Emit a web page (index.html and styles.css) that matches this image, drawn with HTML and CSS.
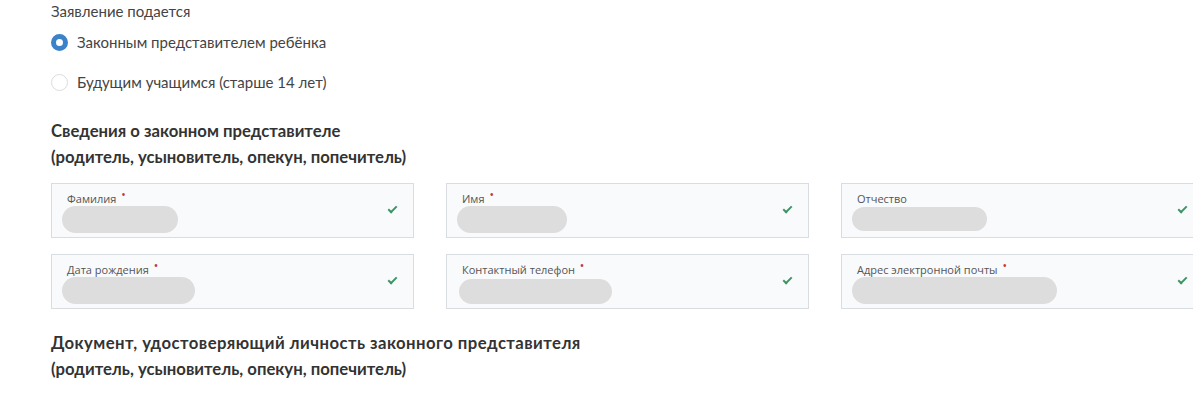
FILE: index.html
```html
<!DOCTYPE html>
<html lang="ru">
	<head>
		<meta charset="UTF-8" />
		<title>Заявление</title>
		<link rel="stylesheet" href="styles.css">
	</head>
	<body>
		<div class="page">
			<div class="group-title">Заявление подается</div>
			<div class="radio-list">
				<label class="radio radio-checked"><span class="radio-mark"></span>Законным представителем ребёнка</label>
				<label class="radio"><span class="radio-mark"></span>Будущим учащимся (старше 14 лет)</label>
			</div>

			<h2 class="section-title">Сведения о законном представителе<br>(родитель, усыновитель, опекун, попечитель)</h2>

			<div class="fields">
				<div class="field">
					<div class="field-label">Фамилия <span class="req">•</span></div>
					<div class="field-value" style="width: 116px;"></div>
					<span class="check"></span>
				</div>
				<div class="field">
					<div class="field-label">Имя <span class="req">•</span></div>
					<div class="field-value" style="width: 110px;"></div>
					<span class="check"></span>
				</div>
				<div class="field">
					<div class="field-label">Отчество</div>
					<div class="field-value small" style="width: 135px;"></div>
					<span class="check"></span>
				</div>
				<div class="field">
					<div class="field-label">Дата рождения <span class="req">•</span></div>
					<div class="field-value" style="width: 133px;"></div>
					<span class="check"></span>
				</div>
				<div class="field">
					<div class="field-label">Контактный телефон <span class="req">•</span></div>
					<div class="field-value shift" style="width: 153px;"></div>
					<span class="check"></span>
				</div>
				<div class="field">
					<div class="field-label">Адрес электронной почты <span class="req">•</span></div>
					<div class="field-value" style="width: 205px;"></div>
					<span class="check"></span>
				</div>
			</div>

			<h2 class="section-title"><span class="wide">Документ, удостоверяющий личность законного представителя</span><br>(родитель, усыновитель, опекун, попечитель)</h2>
		</div>
	</body>
</html>
```

FILE: styles.css
```css
* {
	margin: 0;
	padding: 0;
	box-sizing: border-box;
}

html, body {
	overflow: hidden;
}

body {
	background: #fff;
	font-family: Lato, 'Noto Sans', sans-serif;
	color: #333;
}

.page {
	width: 1203px;
	padding: 1px 0 0 51px;
}

.group-title {
	font-size: 15px;
	line-height: 20px;
	color: #444;
}

.radio-list {
	display: flex;
	flex-direction: column;
	gap: 20px;
	margin-top: 11px;
}

.radio {
	display: flex;
	align-items: center;
	gap: 9px;
	font-size: 15px;
	line-height: 20px;
	color: #444;
}

.radio-mark {
	width: 17px;
	height: 17px;
	border-radius: 50%;
	border: 1px solid #dcdcdc;
	background: #fff;
	flex-shrink: 0;
}

.radio-checked .radio-mark {
	border: 5.5px solid #3b82c9;
	background: #fff;
}

.section-title {
	margin-top: 26px;
	font-size: 16.7px;
	font-weight: 700;
	line-height: 26px;
	color: #333;
}

.section-title .wide {
	letter-spacing: 0.45px;
}

.fields {
	display: grid;
	grid-template-columns: repeat(3, 363px);
	column-gap: 32px;
	row-gap: 16px;
	margin-top: 13px;
}

.fields + .section-title {
	margin-top: 21px;
}

.field {
	position: relative;
	height: 55px;
	background: #f8fafc;
	border: 1px solid #d9dce0;
	padding: 8px 10px 0 10px;
}

.field-label {
	font-family: 'Open Sans', 'Noto Sans', sans-serif;
	font-size: 11px;
	line-height: 13px;
	color: #555;
	padding-left: 5px;
}

.req {
	color: #c0392b;
	font-size: 12px;
	position: relative;
	top: -4px;
	margin-left: 2px;
}

.field-value {
	height: 27px;
	border-radius: 14px;
	background: #dddddd;
	margin-top: 1px;
}

.field-value.small {
	height: 24px;
	margin-top: 2px;
}

.field-value.shift {
	margin-left: 2px;
	height: 25px;
	margin-top: 3px;
}

.check {
	position: absolute;
	right: 16px;
	top: 22px;
	width: 9px;
	height: 5px;
	border-left: 2px solid #3f9466;
	border-bottom: 2px solid #3f9466;
	transform: rotate(-45deg);
}
```
